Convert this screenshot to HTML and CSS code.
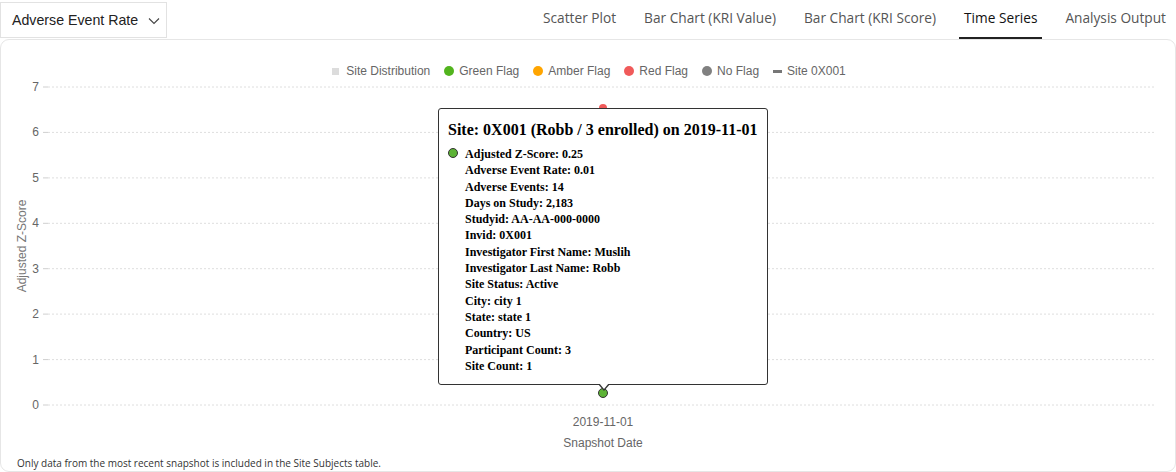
FILE: index.html
```html
<!DOCTYPE html>
<html>
<head>
<meta charset="utf-8">
<link rel="stylesheet" href="styles.css">
</head>
<body>
<div class="topbar">
  <div class="select">
    <span class="select-label">Adverse Event Rate</span>
    <svg class="chev" width="12" height="8" viewBox="0 0 12 8"><path d="M1 1.5 L6 6.5 L11 1.5" fill="none" stroke="#444" stroke-width="1.1"/></svg>
  </div>
  <div class="tabs">
    <div class="tab">Scatter Plot</div>
    <div class="tab">Bar Chart (KRI Value)</div>
    <div class="tab">Bar Chart (KRI Score)</div>
    <div class="tab active">Time Series</div>
    <div class="tab">Analysis Output</div>
  </div>
</div>
<div class="card">
  <div class="legend">
    <span class="lg-item"><span class="sw sq"></span>Site Distribution</span>
    <span class="lg-item"><span class="sw dot green"></span>Green Flag</span>
    <span class="lg-item"><span class="sw dot amber"></span>Amber Flag</span>
    <span class="lg-item"><span class="sw dot red"></span>Red Flag</span>
    <span class="lg-item"><span class="sw dot gray"></span>No Flag</span>
    <span class="lg-item"><span class="sw dash"></span>Site 0X001</span>
  </div>
  <div class="chart">
    <svg class="plot" width="1172" height="376" viewBox="0 0 1172 376">
      <g class="grid">
        <line x1="47" y1="7" x2="1153" y2="7"/>
        <line x1="47" y1="52.4" x2="1153" y2="52.4"/>
        <line x1="47" y1="97.9" x2="1153" y2="97.9"/>
        <line x1="47" y1="143.3" x2="1153" y2="143.3"/>
        <line x1="47" y1="188.7" x2="1153" y2="188.7"/>
        <line x1="47" y1="234.1" x2="1153" y2="234.1"/>
        <line x1="47" y1="279.6" x2="1153" y2="279.6"/>
        <line x1="47" y1="325" x2="1153" y2="325"/>
      </g>
      <g class="ticks">
        <line x1="42" y1="7" x2="47" y2="7"/>
        <line x1="42" y1="52.4" x2="47" y2="52.4"/>
        <line x1="42" y1="97.9" x2="47" y2="97.9"/>
        <line x1="42" y1="143.3" x2="47" y2="143.3"/>
        <line x1="42" y1="188.7" x2="47" y2="188.7"/>
        <line x1="42" y1="234.1" x2="47" y2="234.1"/>
        <line x1="42" y1="279.6" x2="47" y2="279.6"/>
        <line x1="42" y1="325" x2="47" y2="325"/>
      </g>
      <g class="ylab">
        <text x="38" y="7">7</text>
        <text x="38" y="52.4">6</text>
        <text x="38" y="97.9">5</text>
        <text x="38" y="143.3">4</text>
        <text x="38" y="188.7">3</text>
        <text x="38" y="234.1">2</text>
        <text x="38" y="279.6">1</text>
        <text x="38" y="325">0</text>
      </g>
      <text class="ytitle" transform="translate(21,166) rotate(-90)">Adjusted Z-Score</text>
      <text class="xlab" x="602" y="342">2019-11-01</text>
      <text class="xlab" x="602" y="363">Snapshot Date</text>
      <circle cx="602" cy="28" r="4" fill="#f05a5a"/>
      <circle cx="602" cy="313" r="4.5" fill="#5cb335" stroke="#333" stroke-width="1"/>
    </svg>
    <div class="tooltip">
      <div class="tt-title">Site: 0X001 (Robb / 3 enrolled) on 2019-11-01</div>
      <div class="tt-rows">
        <span class="tt-mark"></span>
        <div>Adjusted Z-Score: 0.25</div>
        <div>Adverse Event Rate: 0.01</div>
        <div>Adverse Events: 14</div>
        <div>Days on Study: 2,183</div>
        <div>Studyid: AA-AA-000-0000</div>
        <div>Invid: 0X001</div>
        <div>Investigator First Name: Muslih</div>
        <div>Investigator Last Name: Robb</div>
        <div>Site Status: Active</div>
        <div>City: city 1</div>
        <div>State: state 1</div>
        <div>Country: US</div>
        <div>Participant Count: 3</div>
        <div>Site Count: 1</div>
      </div>
    </div>
  </div>
  <div class="footnote">Only data from the most recent snapshot is included in the Site Subjects table.</div>
</div>
</body>
</html>
```
FILE: styles.css
```css
html, body {
  margin: 0;
  padding: 0;
  background: #fff;
}
body {
  font-family: "Liberation Sans", Arial, sans-serif;
  width: 1176px;
  height: 472px;
  overflow: hidden;
}
.topbar {
  display: flex;
  justify-content: space-between;
  align-items: stretch;
  height: 39px;
}
.select {
  box-sizing: border-box;
  flex-shrink: 0;
  margin-top: 2px;
  width: 167px;
  height: 36px;
  border: 1px solid #e2e2e2;
  display: flex;
  align-items: center;
  padding-left: 11px;
  gap: 10px;
  font-size: 14.2px;
  color: #222;
  white-space: nowrap;
}
.chev {
  flex-shrink: 0;
  margin-top: 1px;
}
.tabs {
  display: flex;
  gap: 18px;
  padding-right: 5px;
}
.tab {
  box-sizing: border-box;
  padding: 0 5px;
  font-family: "Open Sans", sans-serif;
  font-size: 13.7px;
  color: #555;
  display: flex;
  align-items: center;
  height: 39px;
  padding-bottom: 2px;
  border-bottom: 2px solid transparent;
  white-space: nowrap;
}
.tab.active {
  color: #111;
  border-bottom-color: #222;
}
.card {
  box-sizing: border-box;
  height: 433px;
  border: 1px solid #e6e6e6;
  border-radius: 9px;
  display: flex;
  flex-direction: column;
}
.legend {
  margin-top: 24px;
  height: 14px;
  display: flex;
  justify-content: center;
  gap: 14px;
  font-size: 12px;
  color: #666;
  line-height: 14px;
  padding-left: 2px;
}
.lg-item {
  display: flex;
  align-items: center;
  gap: 5px;
}
.sw {
  display: inline-block;
}
.sq {
  width: 7px;
  height: 7px;
  background: #dcdcdc;
  margin-right: 2px;
}
.dot {
  width: 10px;
  height: 10px;
  border-radius: 50%;
}
.green { background: #52b41e; }
.amber { background: #ffa500; }
.red { background: #f05a5a; }
.gray { background: #808080; }
.dash {
  width: 9px;
  height: 3px;
  background: #777;
}
.chart {
  position: relative;
  height: 376px;
  margin-top: 2px;
}
.plot {
  display: block;
}
.grid line {
  stroke: #dedede;
  stroke-width: 1;
  stroke-dasharray: 2 2;
}
.ticks line {
  stroke: #cfcfcf;
  stroke-width: 1;
}
.ylab text {
  font-family: "Liberation Sans", Arial, sans-serif;
  font-size: 12px;
  fill: #666;
  text-anchor: end;
  dominant-baseline: central;
}
.ytitle {
  font-family: "Liberation Sans", Arial, sans-serif;
  font-size: 12px;
  fill: #777;
  text-anchor: middle;
  dominant-baseline: central;
}
.xlab {
  font-family: "Liberation Sans", Arial, sans-serif;
  font-size: 12px;
  fill: #666;
  text-anchor: middle;
  dominant-baseline: central;
}
.tooltip {
  position: absolute;
  left: 437px;
  top: 28px;
  width: 330px;
  height: 277px;
  box-sizing: border-box;
  background: #fff;
  border: 1px solid #333;
  border-radius: 3px;
  padding: 11px 9px 0 9px;
  font-family: "Liberation Serif", "Times New Roman", serif;
  font-weight: bold;
  color: #000;
}
.tooltip::before {
  content: "";
  position: absolute;
  left: 159px;
  bottom: -7px;
  border-left: 6px solid transparent;
  border-right: 6px solid transparent;
  border-top: 7px solid #333;
}
.tooltip::after {
  content: "";
  position: absolute;
  left: 160px;
  bottom: -5px;
  border-left: 5px solid transparent;
  border-right: 5px solid transparent;
  border-top: 6px solid #fff;
}
.tt-title {
  font-size: 16px;
  line-height: 20px;
  white-space: nowrap;
}
.tt-rows {
  position: relative;
  margin-top: 6px;
  padding-left: 17px;
  font-size: 12px;
  line-height: 16.3px;
}
.tt-mark {
  position: absolute;
  left: 0;
  top: 2px;
  width: 10px;
  height: 10px;
  box-sizing: border-box;
  border-radius: 50%;
  background: #5cb335;
  border: 1px solid #333;
}
.footnote {
  font-family: "Open Sans", sans-serif;
  font-size: 10px;
  color: #333;
  line-height: 14px;
  padding-left: 16px;
  margin-top: 0;
}
```
